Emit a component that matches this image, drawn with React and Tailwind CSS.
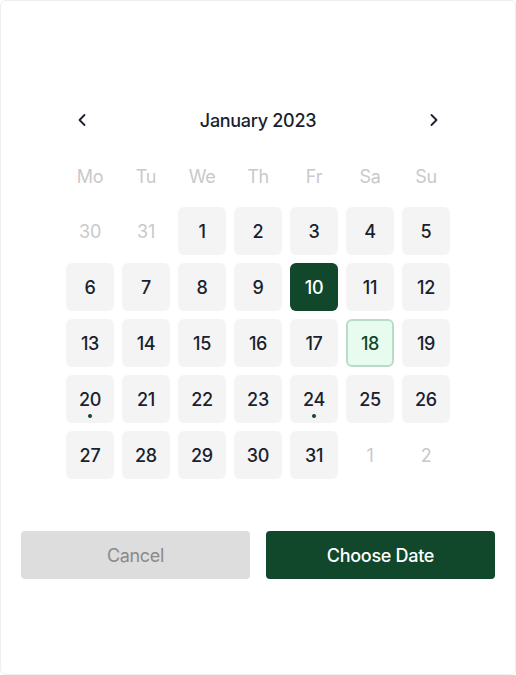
import React from "react";

const ChevronLeft = () => (
  <svg width="20" height="20" viewBox="0 0 24 24" fill="none" stroke="#1a1f2e" strokeWidth="2.2" strokeLinecap="round" strokeLinejoin="round">
    <path d="M15 18l-6-6 6-6" />
  </svg>
);
const ChevronRight = () => (
  <svg width="20" height="20" viewBox="0 0 24 24" fill="none" stroke="#1a1f2e" strokeWidth="2.2" strokeLinecap="round" strokeLinejoin="round">
    <path d="M9 18l6-6-6-6" />
  </svg>
);

const days = [
  { d: 30, out: true }, { d: 31, out: true },
  ...Array.from({ length: 31 }, (_, i) => ({ d: i + 1 })),
  { d: 1, out: true }, { d: 2, out: true },
];

export default function App() {
  return (
    <div className="w-[516px] h-[675px] bg-white tracking-[-0.3px]" style={{ fontFamily: "Inter, 'Liberation Sans', sans-serif" }}>
      <div className="w-full h-full border border-[#eeeeee] rounded-[6px] flex flex-col items-center">
        <div className="mt-[99px] w-[384px] h-10 flex items-center justify-between">
          <button className="w-8 h-8 flex items-center justify-center"><ChevronLeft /></button>
          <div className="text-[18px] font-medium text-[#1a1f2e]">January 2023</div>
          <button className="w-8 h-8 flex items-center justify-center"><ChevronRight /></button>
        </div>
        <div className="mt-[12px] w-[384px] grid grid-cols-7 gap-x-2 h-12 items-center">
          {["Mo", "Tu", "We", "Th", "Fr", "Sa", "Su"].map((w) => (
            <div key={w} className="text-center text-[18px] text-[#c9c9c9]">{w}</div>
          ))}
        </div>
        <div className="mt-[7px] w-[384px] grid grid-cols-7 gap-2">
          {days.map((it, i) => {
            if (it.out)
              return (
                <div key={i} className="h-12 flex items-center justify-center text-[18px] text-[#c9c9c9]">{it.d}</div>
              );
            if (it.d === 10)
              return (
                <div key={i} className="h-12 rounded-[6px] bg-[#11472a] flex items-center justify-center text-[18px] font-medium text-white">{it.d}</div>
              );
            if (it.d === 18)
              return (
                <div key={i} className="h-12 rounded-[6px] bg-[#e8fbef] border-2 border-[#b9dcc6] flex items-center justify-center text-[18px] font-medium text-[#11472a]">{it.d}</div>
              );
            const dot = it.d === 20 || it.d === 24;
            return (
              <div key={i} className="relative h-12 rounded-[6px] bg-[#f4f4f4] flex items-center justify-center text-[18px] font-medium text-[#1a1f2e]">
                {it.d}
                {dot && <span className="absolute left-1/2 -translate-x-1/2 top-[39px] w-[4px] h-[4px] rounded-full bg-[#11472a]" />}
              </div>
            );
          })}
        </div>
        <div className="mt-[52px] w-full px-5 flex gap-4">
          <button className="flex-1 h-12 rounded-[4px] bg-[#dddddd] text-[18px] text-[#8a8a8a]">Cancel</button>
          <button className="flex-1 h-12 rounded-[4px] bg-[#11472a] text-[18px] text-white font-medium">Choose Date</button>
        </div>
      </div>
    </div>
  );
}
